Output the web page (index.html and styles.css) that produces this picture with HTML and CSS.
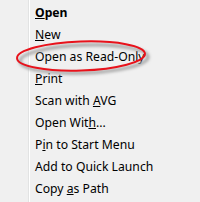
FILE: index.html
```html
<!DOCTYPE html>
<html>
<head>
<meta charset="utf-8">
<link rel="stylesheet" href="styles.css">
</head>
<body>
<div class="menu">
  <div class="gutter"></div>
  <ul class="items">
    <li class="item bold"><u>O</u>pen</li>
    <li class="item"><u>N</u>ew</li>
    <li class="item">Open as Read-Only</li>
    <li class="item"><u>P</u>rint</li>
    <li class="item">Scan with <u>A</u>VG</li>
    <li class="item">Open Wit<u>h</u>...</li>
    <li class="item">P<u>i</u>n to Start Menu</li>
    <li class="item">Add to Quick Launch</li>
    <li class="item">Copy <u>a</u>s Path</li>
  </ul>
  <svg class="mark" width="200" height="202" viewBox="0 0 200 202">
    <defs>
      <filter id="blur" x="-20%" y="-50%" width="140%" height="200%">
        <feGaussianBlur stdDeviation="1.8"/>
      </filter>
    </defs>
    <ellipse cx="84" cy="59" rx="64" ry="14" fill="none" stroke="#a0a0a0" stroke-width="3" filter="url(#blur)" transform="rotate(-2 84 59)"/>
    <ellipse cx="81" cy="56" rx="64" ry="14.5" fill="none" stroke="#e8121b" stroke-width="2" transform="rotate(-2 81 56)"/>
  </svg>
</div>
</body>
</html>
```
FILE: styles.css
```css
html, body {
  margin: 0;
  padding: 0;
  background: #f0f0f0;
}
.menu {
  position: relative;
  width: 200px;
  height: 202px;
  display: flex;
  background: #f0f0f0;
  overflow: hidden;
}
.gutter {
  width: 28px;
  flex: none;
  border-right: 1px solid #e2e3e3;
  box-shadow: 1px 0 0 #ffffff;
}
.items {
  list-style: none;
  margin: 0;
  padding: 2px 0 0 6px;
  font-family: "Noto Sans", "Liberation Sans", sans-serif;
  font-size: 12.2px;
  color: #000;
}
.item {
  height: 22px;
  line-height: 22px;
  white-space: nowrap;
}
.bold {
  font-weight: bold;
}
u {
  text-underline-offset: 1px;
}
.mark {
  position: absolute;
  left: 0;
  top: 0;
  pointer-events: none;
}
```
